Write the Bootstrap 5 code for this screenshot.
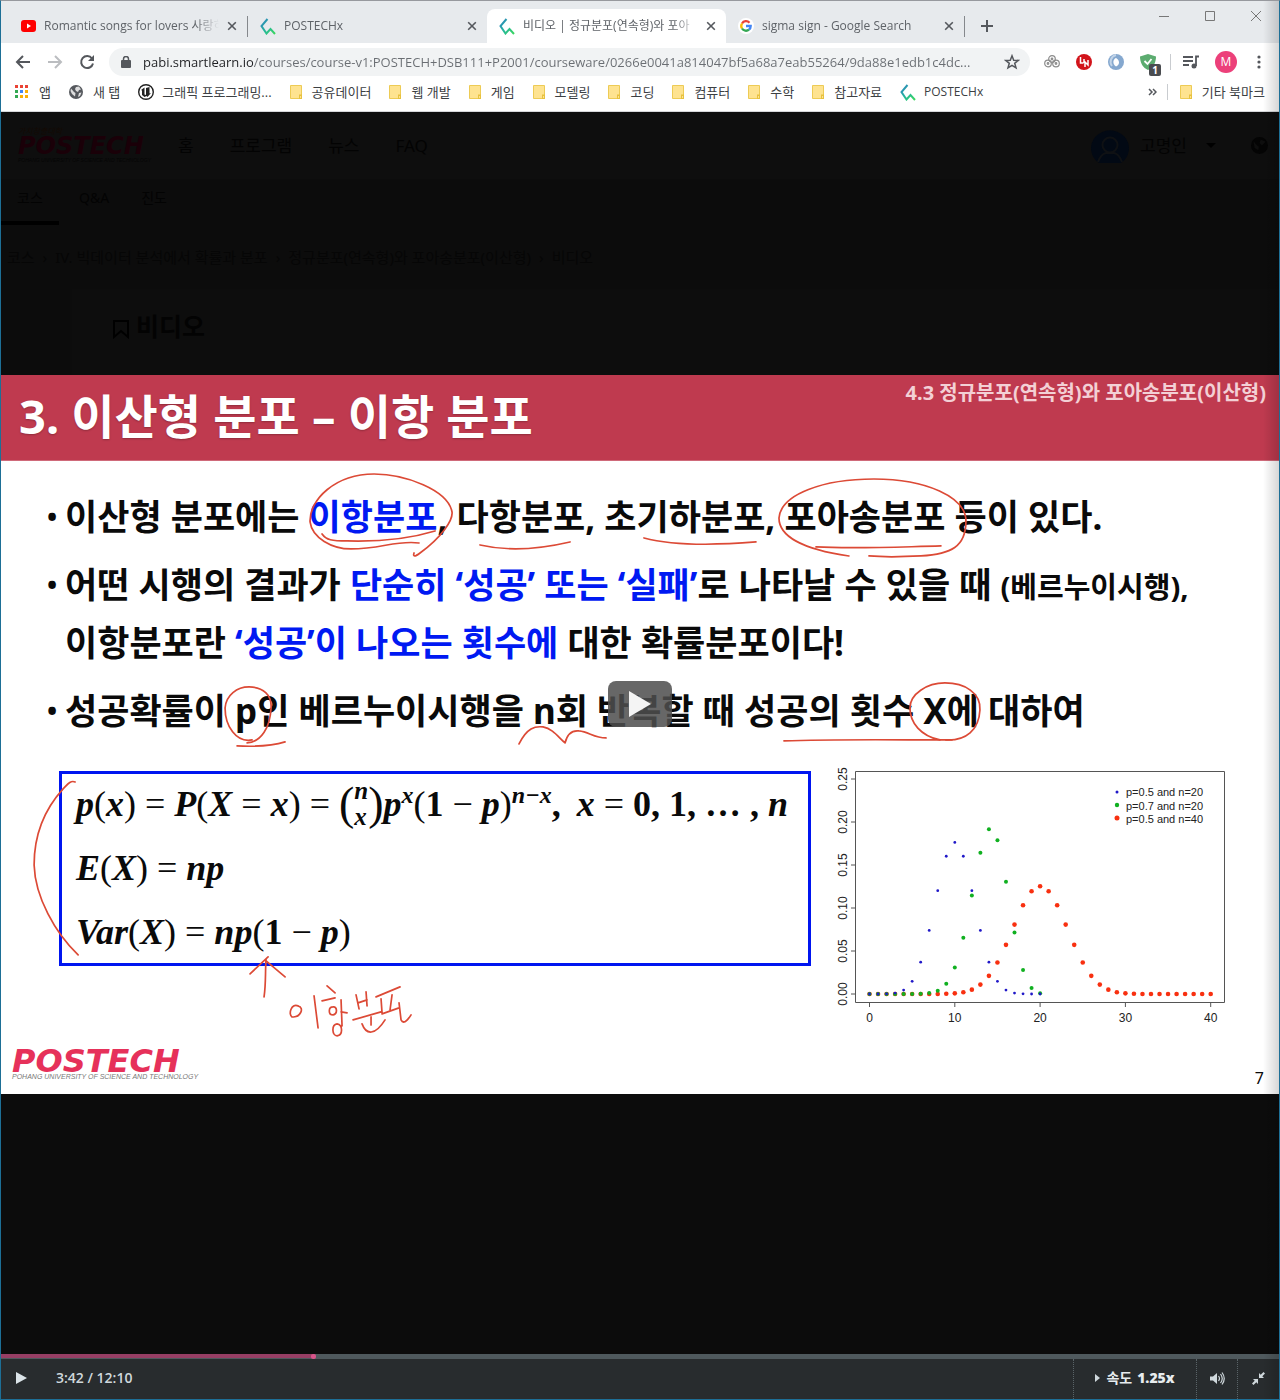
<!DOCTYPE html>
<html lang="ko">
<head>
<meta charset="utf-8">
<meta name="viewport" content="width=device-width, initial-scale=1">
<title>비디오 | 정규분포(연속형)와 포아송분포(이산형)</title>
<link href="https://cdn.jsdelivr.net/npm/bootstrap@5.3.0/dist/css/bootstrap.min.css" rel="stylesheet">
<style>
  body { font-family: "Noto Sans", "Noto Sans CJK KR", sans-serif; background: #0c0c0c; }
  .ui { font-family: "Open Sans", "Noto Sans CJK KR", sans-serif; font-size: 12px; line-height: 18px; color: #5f6368; }
  .window { min-height: 100vh; border: 1px solid #1d6f96; border-top-color: #97999e; }
  .window a { color: inherit; text-decoration: none; }
  .edge { top: 0; right: 0; bottom: 0; width: 16px; background: linear-gradient(to right, transparent, rgba(0,0,0,.16)); pointer-events: none; z-index: 5; }
  svg { display: block; flex: none; }
  button { border: 0; background: none; padding: 0; color: inherit; }

  /* tab strip */
  .strip { background: #e7eaed; height: 42px; padding: 8px 0 0 8px; }
  .tab { width: 239px; height: 34px; padding: 0 10px 0 12px; gap: 8px; flex: 0 1 auto; min-width: 0; }
  .tab .caption { flex: 1; overflow: hidden; white-space: nowrap; -webkit-mask-image: linear-gradient(to right, #000 86%, transparent); }
  .tab.rule { border-right: 1px solid transparent; border-image: linear-gradient(transparent 22%, #85888c 22%, #85888c 80%, transparent 80%) 1; }
  .tab.current { background: #fff; border-radius: 8px 8px 0 0; }
  .winbtns { gap: 36px; padding: 0 18px 20px 0; }

  /* toolbar and bookmarks */
  .tools { background: #fff; height: 37px; padding: 0 12px 0 14px; gap: 16px; }
  .pill { background: #f1f3f4; border-radius: 14px; height: 28px; padding: 0 10px 0 12px; gap: 8px; margin: 0 -2px; }
  .pill input { border: 0; outline: 0; min-width: 0; font-size: 13px; padding: 0; color: transparent; caret-color: #202124;
    background: linear-gradient(to right, #202124 110px, #6a6e73 110px); -webkit-background-clip: text; background-clip: text; }
  .marks { background: #fff; height: 32px; padding: 0 14px 7px; gap: 18px; border-bottom: 1px solid #d5d7da; color: #3c4043; white-space: nowrap; font-size: 13px; }
  .marks a { display: flex; align-items: center; gap: 10px; }
  .marks .latin { font-size: 12px; gap: 8px; }
  .vline { width: 1px; height: 16px; background: #c9ccd0; }
  .tools .vline { margin: 0 -4px 0 -2px; }

  /* course page under the video backdrop */
  .dim { color: #030303; height: 263px; font-size: 17px; overflow: hidden; }
  .dimtop { background: #0e0e0e; height: 67px; padding: 0 11px 0 17px; }
  .dimlogo { width: 128px; white-space: nowrap; }
  .dimlogo b { font: italic bold 24px/20px "DejaVu Sans", sans-serif; display: block; color: #1a0008; }
  .dimlogo i { display: block; font: italic 5px/9px "Liberation Sans", sans-serif; color: #050505; }
  .dimlogo .motto { font: italic 8px/10px "Noto Sans CJK KR", sans-serif; color: #140a04; }
  .dimnav { gap: 36px; margin-left: 32px; }
  .dimtabs { height: 46px; font-size: 14px; }
  .dimtabs a { padding: 8px 16px; line-height: 22px; border-bottom: 4px solid transparent; height: 46px; }
  .dimtabs a.on { border-color: #000; width: 58px; }
  .crumbs { padding: 22px 6px 0; font-size: 15px; line-height: 20px; gap: 8px; color: #060606; height: 64px; }
  .panel { margin-left: 71px; padding: 22px 40px; gap: 6px; background: #0d0d0d; flex: 1; }
  .panel h2 { font-size: 25px; line-height: 30px; font-weight: 700; margin: 0; }

  /* slide */
  .slide { aspect-ratio: 16 / 9; background: #fff; color: #0a0a0a; font-weight: 700; }
  .slidehead { background: #bf3a4f; border-bottom: 1px solid #cf6a7a; color: #fff; height: 86px; padding: 0 13px 0 18px; }
  .slidehead h1 { font-size: 47px; line-height: 82px; font-weight: 700; margin: 0; text-shadow: 0 1px 2px rgba(0,0,0,.25); }
  .slidehead span { font-size: 20px; line-height: 35px; color: #f3d0d5; }
  .points { margin: 0; padding: 27px 0 0 46px; list-style: none; font-size: 35px; line-height: 58px; white-space: nowrap; }
  .points li { display: flex; gap: 6px; margin-bottom: 10px; }
  .points li::before { content: "•"; width: 12px; font-size: 27px; }
  .points em { font-style: normal; color: #0019f2; }
  .points small { font-size: 29px; font-weight: 700; line-height: 1; }
  .lower { padding: 21px 29px 0 58px; gap: 9px; }
  .formula { display: flex; flex-direction: column; gap: 4px; border: 3px solid #0015f0; width: 752px; height: 195px; padding: 0 14px; font: italic bold 36px/60px "Liberation Serif", serif; white-space: nowrap; }
  .formula div { display: flex; align-items: center; height: 60px; }
  .formula u { text-decoration: none; font-style: normal; font-weight: 400; }
  .formula .op { font-style: normal; font-weight: 400; margin: 0 9px; }
  .formula .up { font-style: normal; }
  .formula sup { font-size: 24px; top: -9px; line-height: 24px; }
  .binom { display: inline-flex; flex-direction: column; font-size: 25px; line-height: 26px; }
  .bigp { font-size: 46px; font-style: normal; font-weight: 400; }
  .plot { flex: 1; min-width: 0; overflow: visible; }
  .plot text { font: 400 12px "Liberation Sans", sans-serif; fill: #222; }
  .plot .key text { font-size: 11px; }
  .slidefoot { padding: 0 15px 13px 11px; }
  .brand { color: #e6315a; font: italic bold 32px/22px "DejaVu Sans", sans-serif; }
  .brand i { display: block; font: italic 7px/9px "Liberation Sans", sans-serif; color: #777; }
  .pageno { font-size: 16px; font-weight: 400; line-height: 5px; }
  .ink { inset: 0; width: 100%; height: 100%; fill: none; stroke: #dc4a36; stroke-width: 1.700; stroke-linecap: round; stroke-linejoin: round; pointer-events: none; }
  .bigplay { left: 50%; top: 329px; transform: translate(-50%, -50%); width: 64px; height: 46px; border-radius: 8px; background: rgba(78,78,78,.86); }

  /* player controls */
  .seek { appearance: none; -webkit-appearance: none; display: block; width: 100%; height: 5px; margin: 0; background: linear-gradient(#963e64, #963e64) 0 0 / 24.5% 4px no-repeat #4f595d; }
  .seek::-webkit-slider-thumb { -webkit-appearance: none; width: 5px; height: 5px; border-radius: 2px; background: #d9548a; }
  .controls { background: #282c2e; height: 40px; color: #cfd8dc; font: 600 14px/20px "Open Sans", "Noto Sans CJK KR", sans-serif; padding-left: 13px; }
  .controls button { height: 40px; padding-bottom: 2px; }
  .controls .clock { line-height: 38px; height: 40px; margin-left: 28px; }
  .controls .cell { border-left: 1px dotted #5a6468; }
  .speed { width: 123px; gap: 5px; font-weight: 700; color: #e7ecee; }
  .speed b { font-size: 14px; }
</style>
</head>
<body>
<svg width="0" height="0" class="position-absolute" aria-hidden="true">
  <defs>
    <linearGradient id="teal" x1="0" y1="0" x2="1" y2="1"><stop offset="0" stop-color="#2f7fc1"/><stop offset=".5" stop-color="#24b69b"/><stop offset="1" stop-color="#3bd85c"/></linearGradient>
    <symbol id="px" viewBox="0 0 16 17"><path d="M7.500 1 1.500 8l5 7.500L10.500 11l4.500 5" fill="none" stroke="url(#teal)" stroke-width="2"/></symbol>
    <symbol id="x" viewBox="0 0 10 10"><path d="M1.200 1.200l7.600 7.600M8.800 1.200 1.200 8.800" stroke="#55585d" stroke-width="1.600"/></symbol>
    <symbol id="folder" viewBox="0 0 12 14"><path d="M.5.5h11v9.500q-2 0-2 3.500h-9z" fill="#fee390" stroke="#edcb55"/><rect x="9.500" y="10" width="2" height="3.500" fill="#fee390" stroke="#e8c23f"/></symbol>
    <symbol id="globe" viewBox="0 0 14 14"><circle cx="7" cy="7" r="7" fill="currentColor"/><path d="M2 3.500 5 7l1.500 1-.5 3.500L3 9 1.500 6zM7 2l3-.5 2 3-2 .5-1 2-2-1-1-2zM10 8l2.500-.5L11 11l-2 1z" fill="#fff" fill-opacity=".8"/></symbol>
  </defs>
</svg>

<div class="window position-relative d-flex flex-column">
  <div class="edge position-absolute"></div>

  <header class="ui">
    <div class="strip d-flex">
      <div class="tab rule d-flex align-items-center">
        <svg width="15" height="12" viewBox="0 0 15 12"><rect width="15" height="12" rx="3" fill="#f00"/><path d="M6 3.500v5L10 6z" fill="#fff"/></svg>
        <a class="caption" href="#">Romantic songs for lovers 사랑하</a>
        <button aria-label="탭 닫기"><svg width="10" height="10"><use href="#x"/></svg></button>
      </div>
      <div class="tab d-flex align-items-center">
        <svg width="16" height="17"><use href="#px"/></svg>
        <a class="caption" href="#">POSTECHx</a>
        <button aria-label="탭 닫기"><svg width="10" height="10"><use href="#x"/></svg></button>
      </div>
      <div class="tab current d-flex align-items-center">
        <svg width="16" height="17"><use href="#px"/></svg>
        <a class="caption" href="#">비디오 | 정규분포(연속형)와 포아</a>
        <button aria-label="탭 닫기"><svg width="10" height="10"><use href="#x"/></svg></button>
      </div>
      <div class="tab rule d-flex align-items-center">
        <svg width="16" height="16" viewBox="0 0 16 16"><circle cx="8" cy="8" r="8" fill="#fff"/><g fill="none" stroke-width="2.300"><path d="M4 5.500A4.700 4.700 0 0 1 11.500 4.700" stroke="#ea4335"/><path d="M4 5.500a4.700 4.700 0 0 0 0 5" stroke="#fbbc05"/><path d="M4 10.500a4.700 4.700 0 0 0 7 1.200" stroke="#34a853"/><path d="M11 11.700A4.700 4.700 0 0 0 12.700 8H8" stroke="#4285f4"/></g></svg>
        <a class="caption" href="#">sigma sign - Google Search</a>
        <button aria-label="탭 닫기"><svg width="10" height="10"><use href="#x"/></svg></button>
      </div>
      <button class="ms-3" aria-label="새 탭"><svg width="12" height="12"><path d="M6 0v12M0 6h12" stroke="#55585d" stroke-width="2"/></svg></button>
      <div class="winbtns d-flex ms-auto align-items-center">
        <button aria-label="최소화"><svg width="10" height="10"><path d="M0 5.500h10" stroke="#777"/></svg></button>
        <button aria-label="최대화"><svg width="10" height="10"><path d="M.5.5h9v9h-9z" fill="none" stroke="#777"/></svg></button>
        <button aria-label="닫기"><svg width="10" height="10"><path d="M0 0l10 10M10 0 0 10" stroke="#777"/></svg></button>
      </div>
    </div>

    <div class="tools d-flex align-items-center">
      <button aria-label="뒤로"><svg width="16" height="14" viewBox="0 0 16 14"><path d="M15 7H2M8 1 2 7l6 6" fill="none" stroke="#54575c" stroke-width="2"/></svg></button>
      <button aria-label="앞으로"><svg width="16" height="14" viewBox="0 0 16 14"><path d="M1 7h13M8 1l6 6-6 6" fill="none" stroke="#bbbdc0" stroke-width="2"/></svg></button>
      <button aria-label="새로고침"><svg width="16" height="16" viewBox="0 0 16 16"><path d="M13 4.500A6 6 0 1 0 14 9.500" fill="none" stroke="#54575c" stroke-width="2"/><path d="M15 1v6H9z" fill="#54575c"/></svg></button>
      <div class="pill d-flex align-items-center flex-grow-1">
        <svg width="10" height="12" viewBox="0 0 10 12"><rect y="4" width="10" height="8" rx="1" fill="#54575c"/><path d="M2.500 5V3a2.500 2.500 0 0 1 5 0v2" fill="none" stroke="#54575c" stroke-width="1.500"/></svg>
        <input class="flex-grow-1 ui ms-1" type="text" aria-label="주소" value="pabi.smartlearn.io/courses/course-v1:POSTECH+DSB111+P2001/courseware/0266e0041a814047bf5a68a7eab55264/9da88e1edb1c4dc...">
        <button aria-label="북마크에 추가"><svg width="16" height="16" viewBox="0 0 16 16"><path d="M8 1.800l1.700 4.400 4.600.2-3.600 2.900 1.300 4.600L8 11.300l-4 2.600 1.300-4.600-3.600-2.900 4.600-.2z" fill="none" stroke="#54575c" stroke-width="1.500"/></svg></button>
      </div>
      <svg width="16" height="13" viewBox="0 0 16 13"><g fill="none" stroke="#8c8c8c" stroke-width="1.200"><circle cx="8" cy="4" r="3.300"/><circle cx="4" cy="8.500" r="3.300"/><circle cx="12" cy="8.500" r="3.300"/><circle cx="8" cy="4" r=".8"/><circle cx="4" cy="8.500" r=".8"/><circle cx="12" cy="8.500" r=".8"/></g></svg>
      <svg width="16" height="16" viewBox="0 0 16 16"><circle cx="8" cy="8" r="8" fill="#d2141b"/><path d="M4.500 3v6h3M8 5v4M9 13V8l3 3V6" fill="none" stroke="#fff" stroke-width="1.500"/></svg>
      <svg width="16" height="16" viewBox="0 0 16 16"><circle cx="8" cy="8" r="8" fill="#85a8cf"/><path d="M8 4c-3 1-4 6 0 8.500C12 11 12 6 8 4z" fill="#fff"/><path d="M8 1a7 7 0 0 0-4 11" fill="none" stroke="#c2d4e8" stroke-width="2"/></svg>
      <div class="position-relative"><svg width="16" height="16" viewBox="0 0 16 16"><path d="M8 0 16 2.500C16 9 13 14 8 16 3 14 0 9 0 2.500z" fill="#5cac70"/><path d="M4.500 7 7.500 10l4-5" fill="none" stroke="#fff" stroke-width="1.800"/></svg>
        <span class="position-absolute text-center text-white fw-bold" style="left:9px;top:10px;width:12px;height:12px;background:#4a4c50;border-radius:2px;font-size:10px;line-height:12px">1</span></div>
      <span class="vline"></span>
      <svg width="16" height="14" viewBox="0 0 16 14"><path d="M0 2h10M0 6h10M0 10h6M13 11V1.500h3" fill="none" stroke="#54575c" stroke-width="1.800"/><circle cx="11" cy="11" r="2.500" fill="#54575c"/></svg>
      <span class="rounded-circle text-center text-white" style="width:22px;height:22px;line-height:22px;background:#ec407a">M</span>
      <button aria-label="메뉴"><svg width="14" height="14" viewBox="0 0 14 14" fill="#54575c"><circle cx="6" cy="2" r="1.600"/><circle cx="6" cy="7" r="1.600"/><circle cx="6" cy="12" r="1.600"/></svg></button>
    </div>

    <nav class="marks d-flex align-items-center">
      <a href="#"><svg width="14" height="14" viewBox="0 0 14 14"><path d="M0 0h3v3H0zM5 0h3v3H5zM10 0h3v3h-3z" fill="#ea4335"/><path d="M0 5h3v3H0zM0 10h3v3H0z" fill="#34a853"/><path d="M5 5h3v3H5z" fill="#4285f4"/><path d="M10 5h3v3h-3zM5 10h3v3H5zM10 10h3v3h-3z" fill="#fbaf05"/></svg>앱</a>
      <a href="#"><svg width="14" height="14" color="#55585d"><use href="#globe"/></svg>새 탭</a>
      <a class="latin" href="#"><svg width="16" height="16" viewBox="0 0 16 16"><circle cx="8" cy="8" r="7.300" fill="#fff" stroke="#222" stroke-width="1.400"/><path d="M3 6 6.500 3.500v7L8 11V4l3.500-1v6.500l1.500-.5-3.500 4-1-1-2 1L4 11V6.500z" fill="#222"/></svg><span style="font-size:13px">그래픽 프로그래밍...</span></a>
      <a href="#"><svg width="12" height="14"><use href="#folder"/></svg>공유데이터</a>
      <a href="#"><svg width="12" height="14"><use href="#folder"/></svg>웹 개발</a>
      <a href="#"><svg width="12" height="14"><use href="#folder"/></svg>게임</a>
      <a href="#"><svg width="12" height="14"><use href="#folder"/></svg>모델링</a>
      <a href="#"><svg width="12" height="14"><use href="#folder"/></svg>코딩</a>
      <a href="#"><svg width="12" height="14"><use href="#folder"/></svg>컴퓨터</a>
      <a href="#"><svg width="12" height="14"><use href="#folder"/></svg>수학</a>
      <a href="#"><svg width="12" height="14"><use href="#folder"/></svg>참고자료</a>
      <a class="latin" href="#"><svg width="16" height="17"><use href="#px"/></svg>POSTECHx</a>
      <button class="ms-auto" aria-label="북마크 더보기"><svg width="9" height="8"><path d="M1 1l3 3-3 3M5 1l3 3-3 3" fill="none" stroke="#55585d" stroke-width="1.500"/></svg></button>
      <div class="d-flex align-items-center" style="gap:12px;margin-left:-8px"><span class="vline"></span>
      <a href="#"><svg width="12" height="14"><use href="#folder"/></svg>기타 북마크</a></div>
    </nav>
  </header>

  <main class="d-flex flex-column flex-grow-1">
    <div class="dim d-flex flex-column">
      <div class="dimtop d-flex align-items-center">
        <a class="dimlogo" href="#"><i class="motto">가치창출대학</i><b>POSTECH</b><i>POHANG UNIVERSITY OF SCIENCE AND TECHNOLOGY</i></a>
        <nav class="dimnav d-flex"><a href="#">홈</a><a href="#">프로그램</a><a href="#">뉴스</a><a href="#">FAQ</a></nav>
        <div class="d-flex align-items-center ms-auto" style="gap:11px">
          <svg width="38" height="36" viewBox="0 0 38 36"><path d="M8 35a19 18 0 1 1 22 0z" fill="#020914"/><circle cx="19" cy="17" r="7.500" fill="none" stroke="#0f1114" stroke-width="2"/><path d="M7 34q3-8 8-9h8q5 1 8 9" fill="none" stroke="#0f1114" stroke-width="2"/></svg>
          <span>고명인</span>
          <svg class="mx-2" width="10" height="5"><path d="M0 0h10L5 5z" fill="#000"/></svg>
          <svg class="ms-3 me-n1" width="17" height="17" viewBox="0 0 14 14"><circle cx="7" cy="7" r="7" fill="#040404"/><path d="M2 3.500 5 7l1.500 1L6 11 3 9zM8 2l4 2-3 3-2-2z" fill="#0e0e0e"/></svg>
        </div>
      </div>
      <nav class="dimtabs d-flex"><a class="on" href="#">코스</a><a href="#" class="ms-1">Q&amp;A</a><a href="#">진도</a></nav>
      <nav class="crumbs d-flex"><a href="#">코스</a><span>›</span><a href="#">IV. 빅데이터 분석에서 확률과 분포</a><span>›</span><a href="#">정규분포(연속형)와 포아송분포(이산형)</a><span>›</span><span>비디오</span></nav>
      <div class="panel d-flex">
        <svg class="mt-2" width="18" height="20" viewBox="0 0 18 20"><path d="M2 2h14v16l-7-6-7 6z" fill="none" stroke="#000" stroke-width="2"/></svg>
        <h2>비디오</h2>
      </div>
    </div>

    <section class="slide position-relative d-flex flex-column">
      <div class="slidehead d-flex justify-content-between"><h1>3. 이산형 분포 – 이항 분포</h1><span>4.3 정규분포(연속형)와 포아송분포(이산형)</span></div>
      <ul class="points">
        <li><div>이산형 분포에는 <em>이항분포</em>, 다항분포, 초기하분포, 포아송분포 등이 있다.</div></li>
        <li><div>어떤 시행의 결과가 <em>단순히 ‘성공’ 또는 ‘실패’</em>로 나타날 수 있을 때 <small>(베르누이시행),</small><br>이항분포란 <em>‘성공’이 나오는 횟수에</em> 대한 확률분포이다!</div></li>
        <li><div>성공확률이 p인 베르누이시행을 n회 반복할 때 성공의 횟수 X에 대하여</div></li>
      </ul>
      <div class="lower d-flex align-items-start">
        <div class="formula">
          <div>p<u>(</u>x<u>)</u><span class="op">=</span>P<u>(</u>X<span class="op">=</span>x<u>)</u><span class="op">=</span><span class="bigp">(</span><span class="binom"><span>n</span><span>x</span></span><span class="bigp">)</span>p<sup>x</sup><u>(</u><span class="up">1</span><span class="op">−</span>p<u>)</u><sup>n−x</sup><span class="up">,</span><span class="ms-3">x</span><span class="op">=</span><span class="up">0, 1, … ,&nbsp;</span>n</div>
          <div>E<u>(</u>X<u>)</u><span class="op">=</span>np</div>
          <div>Var<u>(</u>X<u>)</u><span class="op">=</span>np<u>(</u><span class="up">1</span><span class="op">−</span>p<u>)</u></div>
        </div>
        <svg class="plot" viewBox="820 771 430 260" role="img" aria-label="이항분포 확률 그래프">
          <path fill="none" stroke="#555" d="M855.500 771.500h369v231h-369z"/>
          <g id="ticks"></g><g id="dots"></g>
          <g class="key">
            <circle cx="1117" cy="792" r="1.500" fill="#2018c8"/><text x="1126" y="796">p=0.5 and n=20</text>
            <circle cx="1117" cy="805" r="2.200" fill="#10b020"/><text x="1126" y="810">p=0.7 and n=20</text>
            <circle cx="1117" cy="818" r="2.500" fill="#f83010"/><text x="1126" y="823">p=0.5 and n=40</text>
          </g>
        </svg>
      </div>
      <div class="slidefoot d-flex justify-content-between align-items-end mt-auto">
        <div class="brand">POSTECH<i>POHANG UNIVERSITY OF SCIENCE AND TECHNOLOGY</i></div>
        <span class="pageno">7</span>
      </div>

      <!-- pen marks drawn over the slide -->
      <svg class="ink position-absolute" viewBox="1 375 1278 719" aria-label="이항분포">
        <path d="M414 553q-2 6 6 0C442 537 453 520 452 512 448 490 405 474 374 474 335 474 309 500 310 522c2 16 22 27 41 27 30 0 45-9 68-6"/>
        <path d="M322 534c4 6 10 7 25 7 35 1 65-3 88-10M480 545c30 7 60 4 90-3M644 538c30 8 75 7 112 4"/>
        <path d="M849 556C800 549 779 535 779 518c2-24 45-39 95-39 52 0 92 18 92 42 0 26-15 33-45 35-20 1-40 1-52 0M816 547c40 2 80 0 125-1"/>
        <path d="M252 740c-16 3-27-14-27-32 1-13 12-21 24-21 14 0 23 8 22 21-1 20-10 34-24 35M237 746c20 1 35 0 48-4"/>
        <path d="M519 744c8-16 16-18 24-17 10 2 15 10 22 16 2-8 6-13 14-12 10 1 15 7 27 7M784 741c50-2 110-1 168-1"/>
        <path d="M940 740c-19-4-30-17-30-32 0-14 17-25 35-25 20 0 36 10 35 27-1 20-14 31-34 30"/>
        <path d="M75 782c-5-2-8 3-12 7-20 22-29 48-29 76 1 32 21 68 44 90M250 974l18-17M266 959c-1 14 0 24-2 38M266 961l19 16"/>
        <path d="M298 1006c-7-3-10 9-6 11 8 1 13-9 6-11M314 996l4 32M327 986l8 7M322 1001l13-3M333 1007c-5 0-5 8 0 8 5-1 4-9 0-8M341 1000l1 26M341 1012l6 1M337 1024c-6 1-5 12 0 12 6-1 6-11 0-12M356 995l3 14M366 992l1 14M358 1003l9-3M353 1020l28-8M371 1017v8M362 1024c4 11 13 12 23-4M376 997l24-10M381 999l1 14M392 995l-2 15M382 1014l17-6M399 1003l2 17q3 6 10-5"/>
      </svg>
      <button class="bigplay position-absolute d-flex align-items-center justify-content-center" aria-label="재생"><svg width="24" height="28" viewBox="0 0 24 28"><path d="M1 1v26l22-13z" fill="#f4f4f4"/></svg></button>
    </section>

    <footer class="mt-auto">
      <input class="seek" type="range" min="0" max="730" value="178" aria-label="재생 위치">
      <div class="controls d-flex align-items-center">
        <button aria-label="재생"><svg width="14" height="14"><path d="M2 1v12l11-6z" fill="#dbe4e8"/></svg></button>
        <span class="clock">3:42 / 12:10</span>
        <button class="cell speed ms-auto d-flex align-items-center justify-content-center"><svg width="6" height="8"><path d="M0 0v8l5-4z" fill="#cfd8dc"/></svg>속도 <b>1.25x</b></button>
        <button class="cell d-flex align-items-center justify-content-center" style="width:41px" aria-label="음량"><svg width="15" height="13" viewBox="0 0 15 13"><path d="M0 4.500h3L7 1v11L3 8.500H0z" fill="#cfd8dc"/><path d="M8.500 4q2 2.500 0 5M10.500 2q3.500 4.500 0 9M12 .5q4.500 6 0 12" fill="none" stroke="#cfd8dc" stroke-width="1.200"/></svg></button>
        <button class="cell d-flex align-items-center justify-content-center" style="width:42px" aria-label="전체 화면 종료"><svg width="13" height="13" viewBox="0 0 13 13"><path d="M7 6V1l1.700 1.700L11.500 0 13 1.500l-2.700 2.800L12 6zM6 7v5l-1.700-1.700L1.500 13 0 11.500l2.700-2.800L1 7z" fill="#cfd8dc"/></svg></button>
      </div>
    </footer>
  </main>
</div>

<script src="https://cdn.jsdelivr.net/npm/bootstrap@5.3.0/dist/js/bootstrap.bundle.min.js"></script>
<script>
  // binomial probability plot
  const px = k => 869.5 + k * 8.53, py = p => 994 - p * 860;
  const pmf = (n, p) => {
    const out = [Math.pow(1 - p, n)];
    for (let k = 1; k <= n; k++) out.push(out[k - 1] * (n - k + 1) / k * p / (1 - p));
    return out;
  };
  const dots = (n, p, r, c) => pmf(n, p).map((v, k) => `<circle cx="${px(k)}" cy="${py(v)}" r="${r}" fill="${c}"/>`).join('');
  document.getElementById('dots').innerHTML =
    dots(40, .5, 2.3, '#f83010') + dots(20, .7, 2, '#10b020') + dots(20, .5, 1.4, '#2018c8');
  let t = '';
  for (let k = 0; k <= 40; k += 10) t += `<path d="M${px(k)} 1002v5" stroke="#555"/><text x="${px(k)}" y="1022" text-anchor="middle">${k}</text>`;
  for (let i = 0; i <= 5; i++) t += `<path d="M851 ${py(i * .05)}h5" stroke="#555"/><text transform="translate(847 ${py(i * .05)}) rotate(-90)" text-anchor="middle">${(i * .05).toFixed(2)}</text>`;
  document.getElementById('ticks').innerHTML = t;
</script>
</body>
</html>
